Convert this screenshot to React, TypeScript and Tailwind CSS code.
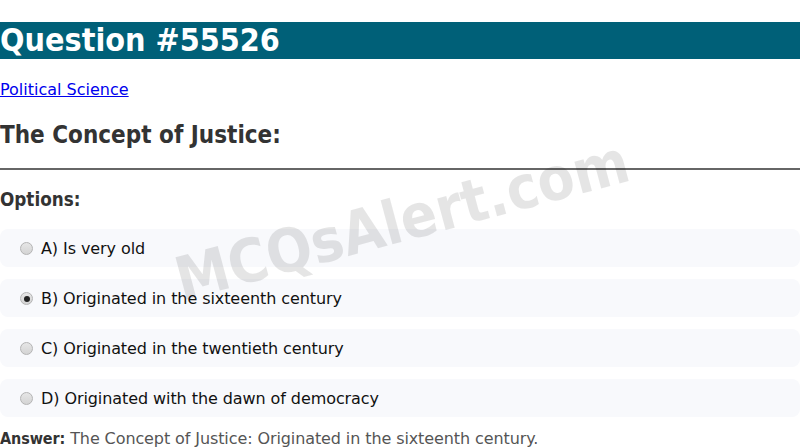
import React from "react";

const options = [
  "A) Is very old",
  "B) Originated in the sixteenth century",
  "C) Originated in the twentieth century",
  "D) Originated with the dawn of democracy",
];

const cond = { fontFamily: '"DejaVu Sans Condensed", "DejaVu Sans", sans-serif' };

export default function App() {
  return (
    <div className="relative w-[800px] h-[448px] overflow-hidden bg-white" style={{ fontFamily: '"DejaVu Sans", sans-serif' }}>
      <div className="h-[22px]" />
      <h1 className="bg-[#006078] text-white font-bold text-[32px] leading-[37px] m-0" style={cond}>Question #55526</h1>
      <div className="h-[21px]" />
      <p className="text-[16px] leading-[20px]">
        <a href="#" className="text-[#0000ee] underline">Political Science</a>
      </p>
      <div className="h-[20px]" />
      <h2 className="text-[24px] leading-[30px] font-bold text-[#333]" style={cond}>The Concept of Justice:</h2>
      <div className="h-[18px] " />
      <hr className="border-0 border-t-2 border-[#666] m-0" />
      <div className="h-[18px]" />
      <h3 className="text-[18.72px] leading-[24px] font-bold text-[#333]" style={cond}>Options:</h3>
      <div className="flex flex-col gap-[12px] mt-[17px]">
        {options.map((o, i) => (
          <div key={i} className="flex items-center h-[38px] rounded-[8px] bg-[#f8f9fc] pl-[20px] pt-[1px] text-[16px] tracking-[-0.08px] text-[#111]">
            <span className="relative w-[13px] h-[13px] mr-[8px] rounded-full border border-[#b4b4b4] bg-gradient-to-b from-[#e6e6e6] to-[#d4d4d4] flex items-center justify-center">
              {i === 1 && <span className="w-[6px] h-[6px] rounded-full bg-[#222]" />}
            </span>
            <span>{o}</span>
          </div>
        ))}
      </div>
      <p className="mt-[12px] text-[16px] leading-[20px] tracking-[-0.1px] text-[#555]">
        <strong className="text-[#333]" style={cond}>Answer:</strong> The Concept of Justice: Originated in the sixteenth century.
      </p>
      <div className="absolute left-[402px] top-[220px] pointer-events-none">
        <div className="-translate-x-1/2 -translate-y-1/2 -rotate-[15deg] whitespace-nowrap font-bold text-[60px] text-black/10" style={cond}>
          MCQsAlert.com
        </div>
      </div>
    </div>
  );
}
